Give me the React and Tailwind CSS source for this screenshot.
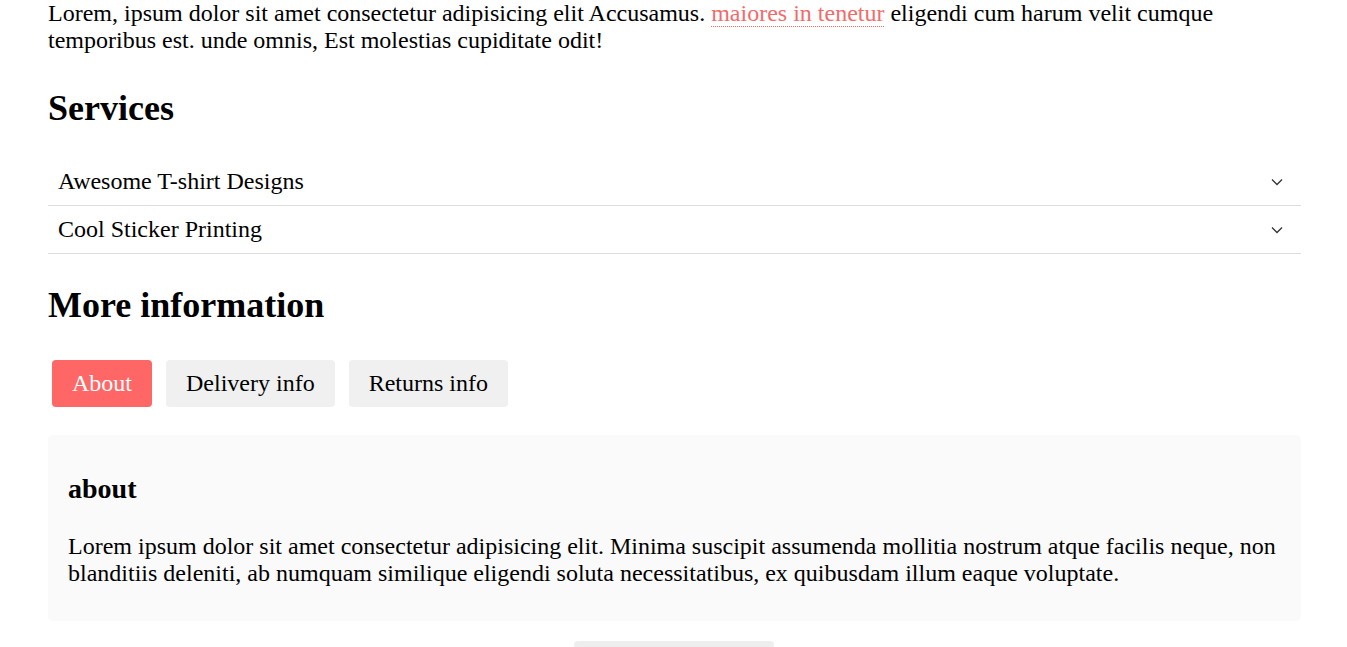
import React, { useState } from 'react';

const services = ['Awesome T-shirt Designs', 'Cool Sticker Printing'];
const tabs = ['About', 'Delivery info', 'Returns info'];

const Chevron = () => (
  <svg width="12" height="8" viewBox="0 0 12 8" fill="none" stroke="#333" strokeWidth="1.3">
    <polyline points="1,1.5 6,6.5 11,1.5" />
  </svg>
);

export default function App() {
  const [active, setActive] = useState(0);

  return (
    <div className="pl-12 pr-[46px] text-black font-['Liberation_Serif',serif] text-[24px] leading-[27px]">
      <p>
        Lorem, ipsum dolor sit amet consectetur adipisicing elit Accusamus.{' '}
        <a href="#" className="text-[#f26b6b] underline decoration-dotted decoration-1 underline-offset-[5px]">
          maiores in tenetur
        </a>{' '}
        eligendi cum harum velit cumque temporibus est. unde omnis, Est molestias cupiditate odit!
      </p>

      {/* Services */}
      <h2 className="mt-[34px] text-[36px] leading-[40px] font-bold">Services</h2>
      <div className="mt-[30px]">
        {services.map((s) => (
          <div key={s} className="flex items-center justify-between h-[48px] pl-[10px] pr-[18px] border-b border-[#dddddd]">
            <span>{s}</span>
            <Chevron />
          </div>
        ))}
      </div>

      {/* More info */}
      <h2 className="mt-[31px] text-[36px] leading-[40px] font-bold">More information</h2>
      <div className="flex gap-[14px] ml-1 mt-[35px]">
        {tabs.map((t, i) => (
          <button
            key={t}
            onClick={() => setActive(i)}
            className={`h-[47px] px-[20px] rounded-[4px] text-[24px] ${
              active === i ? 'bg-[#ff6666] text-white' : 'bg-[#f0f0f0] text-black'
            }`}
          >
            {t}
          </button>
        ))}
      </div>

      <div className="mt-[28px] bg-[#fafafa] rounded-[5px] px-5 pt-[39px] pb-[34px]">
        <h3 className="text-[28px] leading-[30px] font-bold">about</h3>
        <p className="mt-[29px]">
          Lorem ipsum dolor sit amet consectetur adipisicing elit. Minima suscipit assumenda mollitia nostrum atque facilis neque, non blanditiis deleniti, ab numquam similique eligendi soluta necessitatibus, ex quibusdam illum eaque voluptate.
        </p>
      </div>

      <div className="flex justify-center mt-[20px] pr-[2px]">
        <div className="w-[200px] h-[8px] rounded-[4px] bg-[#eeeeee]" />
      </div>
    </div>
  );
}
